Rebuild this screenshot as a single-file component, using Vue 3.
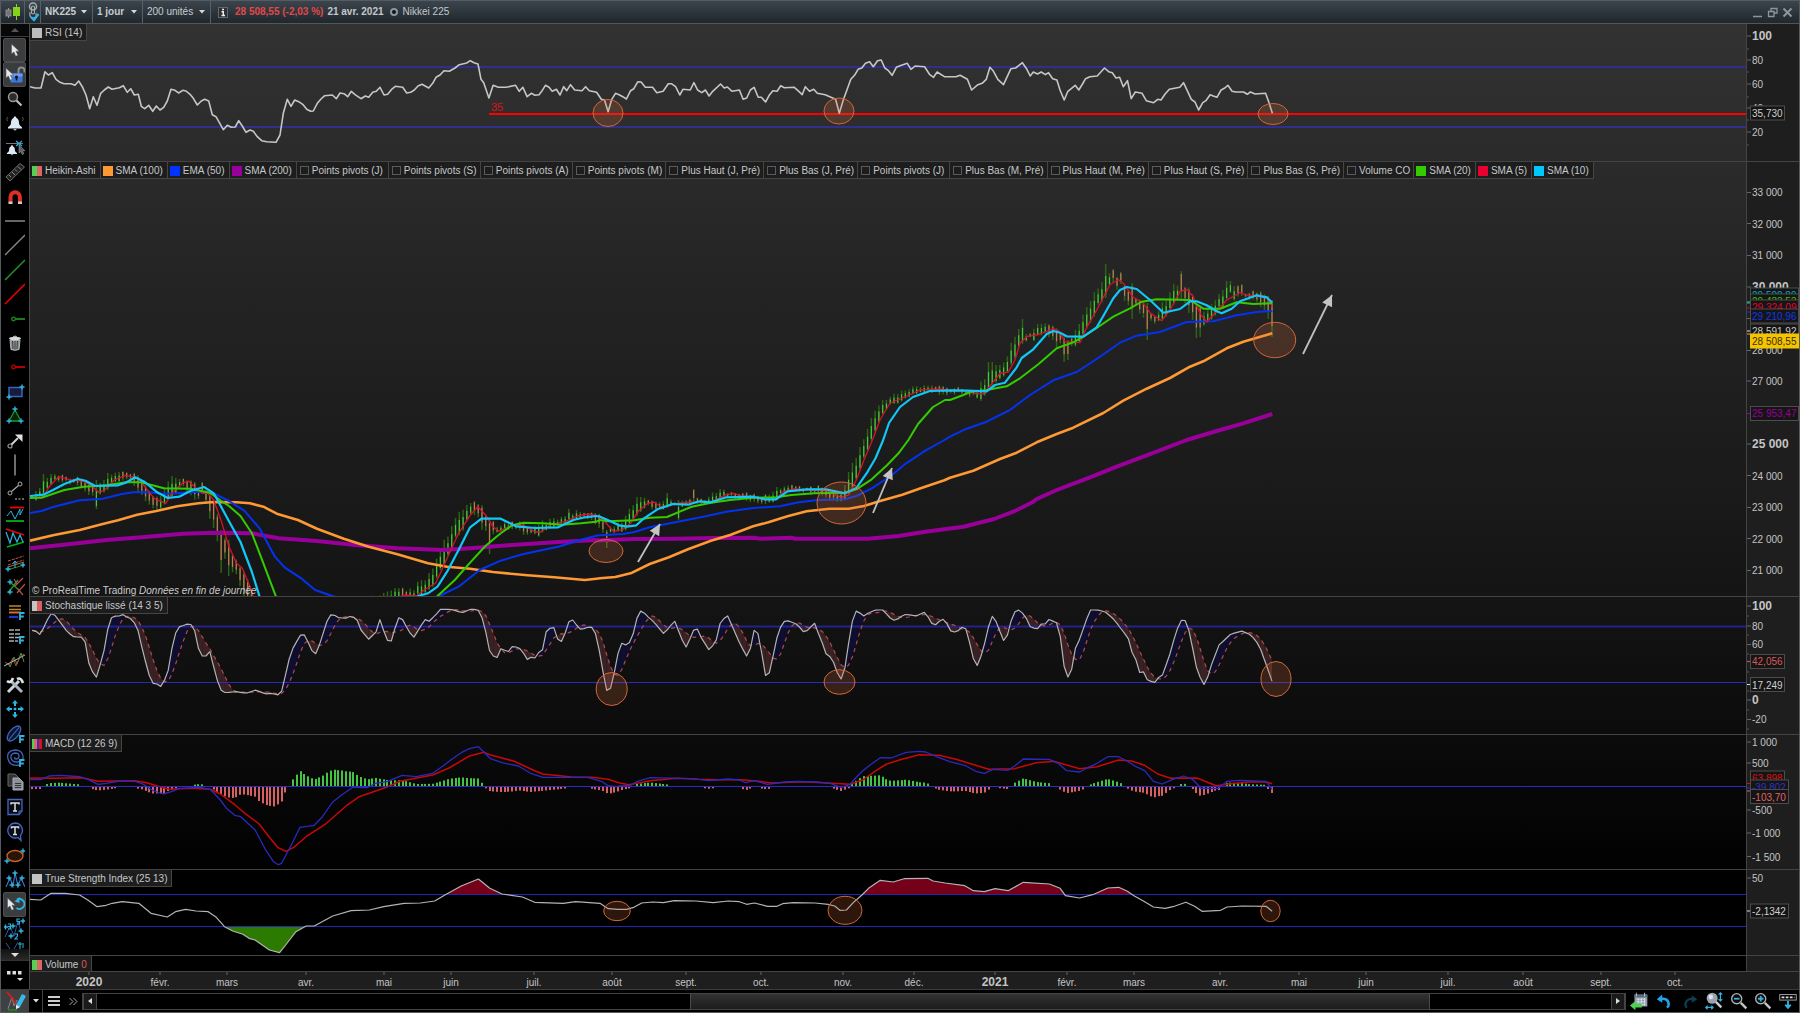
<script setup>
import { ref } from 'vue'

/* ---------- geometry helpers ---------- */

// Reads "x,y x,y …" recorded at a zoom of (kx, 3) from the origin (ox, oy).
function run(ox, oy, kx, text) {
  return text.trim().split(/\s+/).map(pair => {
    const [x, y] = pair.split(',').map(Number)
    return [ox + x / kx, oy + y / 3]
  })
}
const line = pts => pts.map(p => p[0].toFixed(1) + ',' + p[1].toFixed(1)).join(' ')
function at(pts, x) {
  if (x <= pts[0][0]) return pts[0][1]
  for (let i = 1; i < pts.length; i++) {
    if (x <= pts[i][0]) {
      const [x0, y0] = pts[i - 1]
      const [x1, y1] = pts[i]
      return y0 + ((y1 - y0) * (x - x0)) / (x1 - x0 || 1)
    }
  }
  return pts[pts.length - 1][1]
}
const Z = 2.6133

/* ---------- RSI ---------- */

const rsi = [
  ...run(0, 0, 3, `90,260 105,264 123,264 135,215 145,225 157,218 168,238 180,247 192,251 213,251 225,256 236,243 247,260 258,285 269,326 280,290 291,316 302,280 313,270 325,261 336,268 358,263 370,257 382,277 392,266 403,285 415,283 424,319 434,326 446,316 458,334 469,318 480,330 491,322 502,303 513,268 525,271 536,279 548,271 558,273 570,283 580,295 592,315 604,303 614,298 626,303 637,344 648,350 670,389 682,376 694,382 706,381 716,362 727,378 738,397 750,390 760,394 772,410 785,422 800,425 828,427 840,405 850,340 862,298 873,319 884,300 896,305 908,313 920,328 932,334 940,333 952,310 963,297 974,287 997,285 1009,296 1020,279 1032,281 1043,290 1054,274 1065,284 1083,296 1096,288 1106,292 1118,277 1129,274 1140,262 1152,285 1163,283 1174,269 1186,259 1208,262 1220,279 1232,277 1243,270 1254,258 1266,253 1286,264 1298,250 1308,232 1320,225 1332,212 1348,214 1365,204 1378,194 1400,189 1411,182 1422,188 1434,192`),
  ...run(480, 40, 1.912, `2,118 7,128 17,174 25,136 35,142 50,142 68,136 75,154 82,142 90,170 98,160 105,166 113,164 118,154 125,136 132,142 138,154 146,148 153,165 160,140 166,152 173,134 181,150 195,152 202,140 209,152 223,157 232,178 238,180 245,215 252,178 259,160 266,164 273,170 280,177 288,152 294,146 302,125 308,126 316,142 330,142 338,158 350,154 360,131 366,131 374,140 382,165 388,148 402,150 409,128 416,150 424,158 431,150 438,168 445,154 460,132 467,144 473,141 482,154 496,150 503,178 510,174 517,150 524,142 532,172 538,172 546,186 553,166 560,152 568,154 575,137 582,143 601,142 608,152 616,164 622,140 630,154 638,148 645,160 660,164 680,178 687,220 695,178 702,148 709,118 716,106 723,88 730,84 737,70 745,65 752,80 760,62 767,60 774,84 781,92 788,106 796,82 803,77 817,70 824,88 832,78 850,80 860,104 867,112 874,96 888,110 910,110 918,106 932,118 940,150 952,134 960,130 968,118 975,82 981,92 990,118 1001,134 1015,86 1024,84 1037,68 1045,86 1052,108 1058,96 1066,102 1073,96 1081,104 1087,98 1095,116 1103,120 1109,150 1117,180 1124,154 1138,136 1145,150 1152,132 1158,116 1166,110 1180,108 1194,84 1202,95 1209,98 1216,114 1223,112 1230,140 1238,122 1245,176 1253,156 1266,160 1274,182 1288,188 1296,178 1302,180 1310,162 1318,148 1338,142 1345,128 1353,154 1360,178 1367,186 1374,210 1382,188 1388,182 1396,164 1402,168 1409,172 1417,150 1424,144 1430,136 1438,154 1445,156 1460,156 1467,163 1473,156 1482,162 1502,160 1509,190 1515,220`)
]

/* ---------- price overlays ---------- */

const sma100 = [
  ...run(30, 440, Z, `0,302 60,286 130,270 190,252 230,241 280,224 330,213 385,199 440,190 480,186 540,187 575,190 610,200 645,221 700,240 750,266 820,296 885,320 960,343 1040,370 1090,380 1150,386 1210,396 1300,406 1370,412 1450,420 1480,416`),
  ...run(600, 440, Z, `0,415 40,411 80,400 130,372 180,352 230,328 290,302 340,285 400,259 440,247 490,229 540,214 600,206 650,206 690,198 730,184 790,164 840,144 900,121`),
  ...run(950, 240, 3, `0,713 70,692 150,657 200,638 260,607 320,582 370,563 460,519 520,482 590,446 660,414 720,380 760,364 830,325 880,305 967,280`)
]
const sma200 = [
  ...run(30, 440, Z, `0,325 100,313 200,300 300,291 400,281 480,278 580,280 650,295 750,303 850,315 960,325 1080,330 1150,325 1250,316 1380,306 1480,300`),
  ...run(600, 440, Z, `0,301 90,297 200,296 300,294 400,293 420,296 500,293 510,296 700,296 780,288 850,275 950,260 1030,237 1080,215 1130,187`),
  ...run(950, 240, 3, `260,777 320,750 420,712 500,680 590,646 710,600 800,573 880,550 967,522`)
]
const ema50 = [
  ...run(30, 440, Z, `0,219 30,213 60,201 130,181 190,176 240,162 270,157 310,157 350,162 400,158 440,155 480,160 520,183 560,212 600,265 640,350 665,382 710,416 745,450 790,468 900,500 1000,500 1070,468 1120,440 1175,390 1230,362 1290,342 1380,320 1450,296 1480,287`),
  ...run(600, 440, Z, `0,286 60,282 90,276 130,262 200,246 270,230 330,215 400,204 470,199 520,187 570,180 640,178 670,168 710,145 760,108 800,70 850,32 900,0`),
  ...run(950, 240, 3, `0,590 50,566 110,545 180,510 240,465 310,421 380,396 440,357 510,308 560,287 630,276 710,246 790,244 860,226 920,216 967,213`)
]
const sma20 = [
  ...run(30, 440, Z, `0,174 30,173 90,150 140,140 200,136 250,127 290,127 350,145 420,146 470,158 500,183 520,198 550,228 580,280 600,340 643,470 680,560 1000,540 1065,468 1110,420 1150,368 1190,318 1230,280 1260,256 1290,248 1340,250 1390,254 1440,250 1480,245`),
  ...run(600, 440, Z, `0,240 20,244 90,241 130,233 175,231 210,214 240,200 290,188 340,180 400,173 460,172 500,165 560,160 640,158 670,148 710,118 750,76 780,40 806,0`),
  [918, 424], [933, 407], [945, 400],
  ...run(950, 240, 3, `0,480 40,465 60,456 110,450 170,439 210,415 265,373 320,325 370,307 400,290 440,264 490,230 540,205 575,185 620,178 720,180 760,206 810,206 860,187 910,192 967,190`)
]
const sma10 = [
  ...run(30, 440, Z, `0,168 35,164 60,150 90,132 125,117 145,122 170,138 230,136 250,128 275,112 300,126 330,155 360,174 390,170 420,152 455,141 480,160 490,180 520,244 550,306 580,396 600,470 630,560 960,520 1015,468 1040,460 1065,440 1090,395 1120,330 1150,262 1180,236 1230,236 1270,259 1320,264 1380,262 1420,240 1450,232 1480,228`),
  ...run(600, 440, Z, `0,230 20,240 50,256 70,260 95,256 115,235 150,208 190,192 230,194 260,184 290,187 330,172 400,170 430,178 460,178 490,154 540,148 590,148 640,160 670,144 700,94 720,55 740,0`),
  [889, 423], [900, 407], [913, 397], [930, 391],
  ...run(950, 240, 3, `0,451 50,452 110,454 135,435 165,428 200,382 215,354 250,328 290,282 310,273 330,278 350,289 400,290 440,262 460,228 490,175 510,150 530,141 560,147 600,180 640,218 690,207 720,184 740,184 770,196 800,214 815,220 845,206 870,184 920,166 950,172 967,188`)
]
const sma5 = [
  ...run(30, 440, Z, `0,172 35,170 50,140 75,110 100,118 140,124 165,140 180,158 195,150 220,120 250,106 285,115 300,140 325,176 355,190 370,160 400,128 415,124 430,140 450,160 465,160 480,180 500,244 520,320 540,370 555,385 575,440 583,470 620,580 880,500 980,465 1010,468 1030,450 1060,430 1080,380 1100,330 1120,280 1150,226 1170,200 1190,224 1210,260 1225,274 1260,256 1290,256 1320,276 1335,276 1360,254 1400,244 1430,228 1460,222 1480,226`),
  ...run(600, 440, Z, `10,240 20,255 35,274 60,268 80,250 100,214 125,190 140,186 160,200 180,198 200,190 240,186 290,186 330,164 350,160 370,168 390,170 420,176 460,178 480,154 510,146 540,150 590,150 610,162 630,172 650,165 670,120 690,60 712,0`),
  [880, 420], [890, 403], [905, 397], [920, 390], [940, 389],
  ...run(950, 240, 3, `0,452 50,452 70,460 100,462 120,438 150,400 175,396 195,360 210,310 230,290 270,282 310,266 325,272 345,305 390,308 410,262 440,210 480,134 505,119 520,130 550,172 580,190 600,218 635,242 660,210 690,155 710,148 730,170 750,220 770,246 800,214 830,180 870,158 890,165 950,172 967,200`)
]

/* ---------- candles ---------- */

const STEP = 3.78
const LAST = 1272
const bars = []
for (let x = LAST; x > 31; x -= STEP) bars.unshift(x)

// Sessions whose high or low stands out: x, high, low.
const spikes = [
  [45, 474, 495], [97, 480, 509], [109, 473, 490], [119, 472, 482], [171, 476, 498], [204, 482, 494],
  [212, 500, 528], [223, 530, 573], [227, 540, 576], [473, 501, 515], [488, 520, 554], [570, 509, 520],
  [607, 530, 548], [637, 497, 516], [641, 497, 512], [668, 493, 508], [679, 500, 520], [694, 489, 502],
  [720, 489, 500], [850, 472, 494], [854, 463, 490], [989, 362, 390], [993, 362, 386], [1022, 319, 344],
  [1063, 336, 362], [1067, 340, 360], [1104, 264, 298], [1112, 269, 282], [1119, 272, 284], [1131, 283, 319],
  [1149, 303, 340], [1183, 271, 300], [1198, 303, 338], [1202, 305, 337], [1227, 281, 300], [1231, 281, 293],
  [1242, 284, 296], [1268, 296, 319], [1272, 300, 337]
]
const candles = bars.map((x, i) => {
  const n = Math.abs(Math.sin(i * 12.9898) * 43758.5453) % 1
  const m = Math.abs(Math.sin(i * 78.233) * 12345.678) % 1
  const prev = at(sma5, x + 2)
  const next = at(sma5, x + 8)
  const wide = x > 980 || (x > 150 && x < 500) ? 7 : 4
  let hi = Math.min(prev, next) - 1 - n * wide
  let lo = Math.max(prev, next) + 1 + m * wide
  const s = spikes.find(k => Math.abs(k[0] - x) < 1.9)
  if (s) { hi = s[1]; lo = s[2] }
  const up = next < prev
  const span = lo - hi
  return { x, hi, lo, up, top: hi + span * (up ? 0.35 : 0.1), bottom: lo - span * (up ? 0.1 : 0.3) }
})

/* ---------- stochastic ---------- */

const stoch = [
  ...run(30, 440, Z, `0,575 10,568 25,584 35,565 45,540 58,516 68,530 80,548 95,572 112,590 140,592 148,620 155,680 165,698 176,715 182,680 195,625 205,555 213,533 228,526 238,530 245,521 255,534 265,536 280,560 292,620 305,680 318,730 330,730 340,742 350,724 360,700 370,630 380,580 390,560 405,555 418,549 430,570 440,625 450,648 460,648 470,635 480,680 495,745 505,758 540,755 565,760 590,750 615,762 630,760 655,766 665,720 675,665 690,615 700,600 712,575 722,595 732,620 743,648 752,630 765,585 773,550 790,517 800,532 825,535 840,527 855,540 865,570 885,598 900,580 910,570 915,535 925,575 935,603 945,603 955,560 965,530 975,540 990,575 1003,592 1015,570 1032,538 1042,545 1060,525 1072,508 1100,508 1130,518 1150,508 1170,508 1182,535 1190,570 1200,630 1218,660 1230,626 1250,635 1262,617 1285,628 1298,660 1308,650 1317,660 1326,638 1338,636 1350,570 1368,560 1385,618 1395,580 1403,580 1412,522 1420,545 1440,570 1455,562 1472,562 1482,595 1495,680 1510,768 1520,735 1530,680 1540,620 1550,605 1560,620`),
  ...run(600, 440, Z, `78,605 85,590 95,540 102,515 110,512 125,530 140,545 168,583 180,562 197,542 210,590 227,625 237,590 248,562 255,568 263,590 285,630 303,605 315,545 333,526 350,570 365,610 384,650 395,620 403,570 412,576 422,635 433,710 442,700 452,650 463,590 477,545 490,542 510,550 520,558 528,576 548,570 558,540 568,575 578,595 587,640 597,643 612,670 627,722 637,705 646,640 656,560 666,514 675,512 686,530 700,520 720,510 740,510 755,530 765,542 780,536 795,523 832,528 845,514 857,530 872,560 885,545 900,536 918,576 932,576 948,560 960,570 970,635 980,672 988,678 998,640 1010,590 1018,545 1028,523 1040,560 1055,602 1065,585 1075,540 1085,514 1095,510 1110,525 1125,562 1143,567 1155,550 1163,552 1172,538 1193,548 1203,590 1213,680 1222,712 1231,700 1240,630 1250,608 1265,560 1280,510 1300,510 1320,515 1345,540 1370,580 1378,582 1388,635 1398,645 1408,702 1417,685 1427,718 1438,722 1447,732 1457,715 1470,705 1490,640 1502,590 1515,545 1525,536 1535,550 1548,620 1560,690`),
  [1200, 677], [1203, 685], [1206, 683], [1211, 666], [1219, 645], [1231, 634], [1242, 631], [1251, 635], [1259, 645], [1266, 664], [1273, 684]
]
const kLine = bars.map(x => [x, at(stoch, x)])
const dLine = kLine.map((p, i) => {
  const part = kLine.slice(Math.max(0, i - 4), i + 1)
  return [p[0], part.reduce((a, b) => a + b[1], 0) / part.length]
})
const bands = kLine.slice(1).map((p, i) => ({
  up: p[1] + kLine[i][1] < dLine[i + 1][1] + dLine[i][1],
  d: line([kLine[i], p, dLine[i + 1], dLine[i]])
}))

/* ---------- MACD ---------- */

const macd = [
  ...run(0, 720, 2.45, `73,179 100,179 120,168 145,166 170,168 195,170 215,178 240,193 260,190 300,182 330,184 350,192 375,212 400,222 420,215 440,205 490,202 515,208 540,240 555,265 575,286 590,290 625,330 650,388 670,425 682,434 690,430 715,372 735,322 770,316 790,290 815,246 840,222 865,202 900,203 920,190 950,184 985,166 1020,170 1060,160 1085,138 1110,115 1130,98 1150,86 1172,80 1185,95 1200,115 1230,128 1270,138 1300,160 1330,172 1400,172 1440,172 1475,185 1490,197 1510,200`),
  ...run(620, 740, 2.306, `0,138 25,136 40,124 70,113 165,116 205,122 250,117 275,120 290,128 310,122 340,133 380,126 410,124 455,126 485,130 510,142 530,134 545,112 560,92 580,72 600,53 625,54 660,37 690,34 705,36 730,50 760,65 795,76 820,94 840,100 860,88 895,91 910,78 930,57 990,58 1010,70 1030,92 1060,96 1080,82 1100,70 1125,50 1150,50 1170,64 1190,80 1210,92 1230,124 1250,132 1275,118 1300,108 1320,118 1340,145 1380,145 1400,124 1430,121 1490,124 1504,148`)
]
const signal = [
  ...run(0, 720, 2.45, `73,174 130,175 200,173 240,184 330,182 360,188 385,198 415,208 470,205 515,208 540,222 575,254 600,280 635,312 660,352 680,382 700,394 720,382 750,350 800,310 850,256 880,230 950,200 980,184 1060,165 1100,144 1150,108 1185,97 1200,104 1260,124 1310,152 1330,162 1400,171 1450,172 1490,178 1510,186`),
  ...run(620, 740, 2.306, `0,129 20,134 70,122 130,115 180,118 230,119 280,119 320,124 350,129 420,125 490,130 530,133 560,120 590,92 615,72 650,58 690,44 735,46 775,58 820,76 850,88 910,86 960,68 1000,64 1060,86 1100,80 1150,60 1180,63 1210,76 1240,102 1270,115 1330,114 1375,137 1400,133 1450,126 1490,126 1504,131`)
]
const ZERO = 786.5
const histogram = bars
  .map(x => ({ x, h: at(signal, x) - at(macd, x) }))
  .filter(b => Math.abs(b.h) > 0.7)
  .map(b => ({ x: Math.round(b.x) - 1, up: b.h > 0, y: b.h > 0 ? ZERO - b.h - 1 : ZERO, h: Math.abs(b.h) + 1 }))

/* ---------- TSI ---------- */

const tsi = [
  ...run(0, 720, 2.45, `73,538 100,540 125,520 160,520 195,525 215,540 238,560 260,556 275,550 300,545 340,550 370,580 410,591 430,575 455,568 480,573 510,575 530,592 550,620 570,633 595,643 610,655 625,660 660,690 685,698 700,675 725,635 750,618 770,618 815,588 860,572 905,570 940,560 990,550 1030,549 1065,543 1090,525 1130,498 1172,477 1200,505 1230,522 1280,531 1310,547 1380,550 1410,545 1470,550 1490,566 1515,568`),
  ...run(620, 740, 2.306, `0,508 15,508 30,503 50,489 75,486 100,488 125,482 175,483 215,488 250,483 275,485 292,493 310,489 340,499 362,499 375,491 400,488 450,489 480,493 495,498 507,511 522,510 540,485 558,465 575,443 600,421 630,426 655,416 710,415 722,423 750,429 795,437 815,452 840,455 865,446 895,452 930,427 990,432 1015,445 1027,467 1060,474 1090,464 1125,444 1150,442 1170,454 1185,467 1210,485 1230,501 1257,505 1275,500 1305,487 1325,499 1342,514 1385,511 1400,501 1435,498 1490,499 1504,514`)
]
const UPPER = 894.5
const LOWER = 926.5
const fine = []
for (let x = 30; x <= LAST; x += 1) fine.push([x, at(tsi, x)])
const overbought = line([[160, UPPER], ...fine.filter(p => p[0] > 160).map(p => [p[0], Math.min(p[1], UPPER)]), [LAST, UPPER]])
const oversold = line([[30, LOWER], ...fine.map(p => [p[0], Math.max(p[1], LOWER)]), [LAST, LOWER]])

/* ---------- panels ---------- */

const ticks = list => list.map(([y, t, strong]) => ({ y, t, strong }))
const series = (points, color, width) => ({ points: line(points), color, width })
const off = ''
const panels = [
  {
    id: 'rsi', top: 24, h: 138,
    labels: [{ t: 'RSI (14)', c: '#bdbdbd' }],
    levels: [{ y: 67, c: '#30308c', w: 2 }, { y: 127, c: '#30308c', w: 2 }, { y: 114, c: '#f00', w: 2, x: 489 }],
    lines: [series(rsi, '#c6c6c6', 1.6)],
    circles: [[608, 113, 15, 13.5], [839, 111, 15, 13], [1273, 114, 15, 10.5]],
    ticks: ticks([[36, '100', true], [60, '80'], [84, '60'], [108, '40'], [132, '20']]),
    minor: [49, 72, 97, 120, 145],
    tags: [{ y: 113, t: '35,730', w: 34, c: '#d0d0d0' }]
  },
  {
    id: 'price', top: 162, h: 435,
    labels: [
      { t: 'Heikin-Ashi', c: 'linear-gradient(90deg,#55d055 50%,#e06464 50%)' },
      { t: 'SMA (100)', c: '#ff9933' }, { t: 'EMA (50)', c: '#0033ff' }, { t: 'SMA (200)', c: '#990099' },
      { t: 'Points pivots (J)', c: off }, { t: 'Points pivots (S)', c: off }, { t: 'Points pivots (A)', c: off },
      { t: 'Points pivots (M)', c: off }, { t: 'Plus Haut (J, Pré)', c: off }, { t: 'Plus Bas (J, Pré)', c: off },
      { t: 'Points pivots (J)', c: off }, { t: 'Plus Bas (M, Pré)', c: off }, { t: 'Plus Haut (M, Pré)', c: off },
      { t: 'Plus Haut (S, Pré)', c: off }, { t: 'Plus Bas (S, Pré)', c: off }, { t: 'Volume CO', c: off },
      { t: 'SMA (20)', c: '#33cc00' }, { t: 'SMA (5)', c: '#e80030' }, { t: 'SMA (10)', c: '#00c8ff' }
    ],
    levels: [],
    lines: [
      series(sma200, '#990099', 4), series(sma100, '#ff9933', 2.6), series(ema50, '#0433f0', 2),
      series(sma5, '#d8102e', 1.3), series(sma20, '#33cc00', 2), series(sma10, '#12c8fa', 2.2)
    ],
    circles: [[606, 551, 17, 11.5], [841.5, 503, 24.5, 21], [1274.7, 340, 21, 17.7]],
    arrows: [[638, 562, 660, 524], [873, 513, 892, 468], [1303, 354, 1332, 295]],
    ticks: ticks([[192.5, '33 000'], [223.5, '32 000'], [255.5, '31 000'], [287, '30 000', true], [318.5, ''], [350.5, '28 000'], [381, '27 000'], [444, '25 000', true], [475.5, '24 000'], [507.5, '23 000'], [538.5, '22 000'], [570.5, '21 000']]),
    minor: [],
    tags: [
      { y: 295, t: '29 500,89', w: 48, c: '#00a8d0' }, { y: 301, t: '29 433,53', w: 48, c: '#33cc00' },
      { y: 307, t: '29 324,09', w: 48, c: '#e80030' }, { y: 316, t: '29 210,96', w: 48, c: '#1238e8' },
      { y: 331, t: '28 591,92', w: 48, c: '#c8c8c8' }, { y: 341, t: '28 508,55', w: 48, c: '#3a3000', hot: true },
      { y: 413.5, t: '25 953,47', w: 48, c: '#990099' }
    ],
    marks: [[303, '#33cc00'], [302, '#12c8fa'], [308, '#e80030'], [312, '#0433f0'], [331, '#ddd'], [334, '#ff9933'], [413.5, '#990099']],
    note: true
  },
  {
    id: 'stoch', top: 597, h: 138,
    labels: [{ t: 'Stochastique lissé (14 3 5)', c: 'linear-gradient(90deg,#c4c4c4 50%,#d86060 50%)' }],
    levels: [{ y: 626.5, c: '#22228c', w: 2 }, { y: 682.5, c: '#2a2ac0', w: 1 }],
    lines: [series(kLine, '#b4b4b4', 1.2)],
    circles: [[611.7, 689, 15.5, 16.5], [839.5, 682, 15.5, 12.3], [1276, 679, 15, 17.5]],
    ticks: ticks([[606, '100', true], [626, '80'], [644.5, '60'], [700, '0', true], [719.5, '-20']]),
    minor: [616, 635, 654, 672, 691, 710, 729],
    tags: [{ y: 661.5, t: '42,056', w: 34, c: '#d85a5a' }, { y: 684.5, t: '17,249', w: 34, c: '#d0d0d0' }],
    marks: [[661.5, '#d85a5a'], [684.5, '#ddd']]
  },
  {
    id: 'macd', top: 735, h: 135,
    labels: [{ t: 'MACD (12 26 9)', c: 'linear-gradient(90deg,#4fd04f 25%,#e06464 25% 50%,#3030e0 50% 75%,#e01010 75%)' }],
    levels: [],
    lines: [series(signal, '#c80808', 1.5), series(macd, '#2a2ac0', 1.3)],
    circles: [],
    ticks: ticks([[742, '1 000'], [763, '500'], [810, '-500'], [833, '-1 000'], [856.5, '-1 500']]),
    minor: [],
    tags: [{ y: 778, t: '63,898', w: 34, c: '#d81010' }, { y: 787, t: '-39,802', w: 38, c: '#3030c8' }, { y: 796.5, t: '-103,70', w: 38, c: '#e06464' }],
    marks: [[783.5, '#d81010'], [788, '#3030c8'], [791, '#e06464']]
  },
  {
    id: 'tsi', top: 870, h: 86,
    labels: [{ t: 'True Strength Index (25 13)', c: '#c4c4c4' }],
    levels: [{ y: UPPER, c: '#2525b8', w: 1 }, { y: LOWER, c: '#2525b8', w: 1 }],
    lines: [series(tsi, '#b4b4b4', 1.2)],
    circles: [[617, 911, 13.3, 9.7], [845, 910.3, 17, 14], [1270.5, 911, 9.7, 10.7]],
    ticks: ticks([[878, '50']]),
    minor: [],
    tags: [{ y: 911, t: '-2,1342', w: 38, c: '#d0d0d0' }],
    marks: [[911, '#ddd']]
  },
  {
    id: 'volume', top: 956, h: 16,
    labels: [{ t: 'Volume', c: 'linear-gradient(90deg,#55d055 50%,#e06464 50%)', value: '0' }],
    levels: [], lines: [], circles: [], ticks: [], minor: [], tags: []
  }
]
const pct = (p, y) => (((y - p.top) / p.h) * 100).toFixed(3) + '%'
const pctX = x => (((x - 30) / 1716) * 100).toFixed(3) + '%'
function head([x0, y0, x1, y1]) {
  const a = Math.atan2(y1 - y0, x1 - x0)
  const bx = x1 - 11 * Math.cos(a)
  const by = y1 - 11 * Math.sin(a)
  return line([[x1, y1], [bx - 5.5 * Math.sin(a), by + 5.5 * Math.cos(a)], [bx + 5.5 * Math.sin(a), by - 5.5 * Math.cos(a)]])
}

const months = [
  [89, '2020', true], [160, 'févr.'], [227, 'mars'], [306, 'avr.'], [384, 'mai'], [451, 'juin'], [534, 'juil.'],
  [612, 'août'], [686, 'sept.'], [761, 'oct.'], [843, 'nov.'], [914, 'déc.'], [995, '2021', true], [1067, 'févr.'],
  [1134, 'mars'], [1220, 'avr.'], [1299, 'mai'], [1366, 'juin'], [1448, 'juil.'], [1523, 'août'], [1601, 'sept.'], [1675, 'oct.']
]

/* ---------- tools ---------- */

const C = '#2fb4e0'
const plus = (x, y, c = C) => `<path d="M${x - 2.5} ${y}h5M${x} ${y - 2.5}v5" stroke="${c}" stroke-width="1.4"/>`
const cursor = (x, y) => `<path d="M${x} ${y}v10l2.4-2 1.8 4.2 2.2-1-1.9-4h3.2z" fill="#e4e8ec" stroke="#555" stroke-width=".6"/>`
const bell = (x, y, s) => `<g transform="translate(${x} ${y}) scale(${s})"><path d="M0-6.500c-1 0-1.300.7-1.200 1.200C-3.500-4.500-4-2-4 0c0 2-1.500 3-3 4.200v1.300H7V4.200C5.500 3 4 2 4 0c0-2-.5-4.500-2.800-5.300C1.300-5.800 1-6.500 0-6.500z" fill="#dfe9f5"/><path d="M-2 6h4l-2 1.800z" fill="#b8c4d2"/></g>`
const bigF = (x, y) => `<path d="M${x} ${y}v-7h4.500M${x} ${y - 3.5}h3.800" stroke="${C}" stroke-width="1.8" fill="none"/>`
const tools = [
  ['Pointeur', cursor(8.5, 6)],
  ['Verrouillage', `<path d="M15.500 10.500V7.500a3 3 0 0 1 6 0v2" stroke="#8a8f96" stroke-width="2" fill="none"/><rect x="7.500" y="10.500" width="12" height="9" rx="1" fill="#3f78e0"/><rect x="7.500" y="10.500" width="12" height="3" fill="#6c9cf0"/><circle cx="13.500" cy="14" r="1.500" fill="#111"/><path d="M13.500 14v3.500" stroke="#111" stroke-width="1.500"/>${cursor(3, 5)}`, true],
  ['Loupe', `<circle cx="10" cy="10" r="4.500" fill="#2c2c2c" stroke="#9a9a9a" stroke-width="1.400"/><path d="M13.500 13.500l5 5" stroke="#bbb" stroke-width="2.200"/>`],
  ['Alerte', bell(12, 12, 1) + `<path d="M4.500 6q-1.500 2 0 4M19.500 6q1.500 2 0 4" stroke="#555" fill="none"/>`],
  ['Alerte sur objet', `<path d="M3 7.500h17" stroke="#777"/>${bell(9, 14, .72)}<path d="M13 5l6 5m0-5l-6 5" stroke="${C}" stroke-width="1.200"/><path d="M16 9v8l1.800-1.500 1.400 3 1.700-.8-1.400-3h2.400z" fill="#56606c" stroke="#aaa" stroke-width=".5"/>`],
  ['Règle', `<path d="M3 17L17 3.500l4.500 3.500L7 21z" fill="#222" stroke="#777" stroke-width=".9"/><path d="M6 15l2 2M9 12l3 3M12 9.500l2 2M15 6.500l3 3" stroke="#aaa" stroke-width=".8"/>`],
  ['Aimant', `<path d="M7.500 17.500v-5.500a4.700 4.700 0 0 1 9.400 0v5.500" stroke="#dd2f22" stroke-width="4" fill="none"/><path d="M5.500 16.500h4v2.500h-4zM15 16.500h4v2.500h-4z" fill="#ccc"/>`],
  ['Ligne horizontale', `<path d="M2 12h20" stroke="#a8a8a8" stroke-width="1.200"/>`],
  ['Droite', `<path d="M2 22L22 2" stroke="#8a8a8a" stroke-width="1.300"/>`],
  ['Droite verte', `<path d="M2 22L22 2" stroke="#1f9a26" stroke-width="1.500"/>`],
  ['Droite rouge', `<path d="M2 22L22 2" stroke="#e80000" stroke-width="1.600"/>`],
  ['Demi-droite verte', `<circle cx="10.500" cy="12" r="1.800" fill="none" stroke="#1c8a1c" stroke-width="1.300"/><path d="M12.500 12H22" stroke="#22a522" stroke-width="1.500"/>`],
  ['Corbeille', `<path d="M7 9h10l-1 9.500q-4 1.600-8 0z" fill="#8a8f92" stroke="#b5b9bb"/><path d="M9.500 10l.5 8M12 10v8.500M14.500 10l-.5 8" stroke="#444"/><ellipse cx="12" cy="7.500" rx="6" ry="1.700" fill="#d5d9db"/><path d="M10 6q2-2 4 0" stroke="#ccc" fill="none"/>`],
  ['Demi-droite rouge', `<circle cx="10.500" cy="12" r="1.800" fill="none" stroke="#b00" stroke-width="1.300"/><path d="M12.500 12H22" stroke="#f00000" stroke-width="1.500"/>`],
  ['Rectangle', `<rect x="6" y="7.500" width="13" height="9" fill="#141d3c" stroke="#3e63b8" stroke-width="1.500"/>${plus(19, 7)}${plus(6, 17)}`],
  ['Triangle', `<path d="M12 6l6 11H6z" fill="#07230a" stroke="#1f9a26" stroke-width="1.300"/>${plus(12, 5)}${plus(6, 17)}${plus(18, 17)}`],
  ['Flèche', `<circle cx="7" cy="17" r="2" fill="none" stroke="#999" stroke-width="1.200"/><path d="M8.500 15.500L15 9" stroke="#d0d0d0" stroke-width="2"/><path d="M19.500 5.500v7.500l-7.500-7.500z" fill="#e2e2e2"/>`],
  ['Ligne verticale', `<path d="M12 1.500v21" stroke="#c8c8c8" stroke-width="1.100"/>`],
  ['Segment', `<circle cx="7" cy="15" r="2" fill="none" stroke="#aaa"/><circle cx="17" cy="6" r="2" fill="none" stroke="#aaa"/><path d="M8.500 13.500l7-6" stroke="#aaa" stroke-width="1.200"/><path d="M12 21h10" stroke="#ccc" stroke-dasharray="2 1.500"/>`],
  ['Canal horizontal', `<path d="M7 5.500h14" stroke="#e00" stroke-width="1.800"/><path d="M3 19h18" stroke="#00b020" stroke-width="1.800"/><path d="M4 14l4-5 4 8 5-10 0 6 3-6" stroke="${C}" fill="none"/>`],
  ['Canal convergent', `<path d="M3 3l18 6" stroke="#e00" stroke-width="1.800"/><path d="M4 21l17-5" stroke="#00b020" stroke-width="1.800"/><path d="M3 6l4 11 3-10 4 9 3-7 3 7" stroke="${C}" fill="none" stroke-width="1.200"/>`],
  ['Régression', `<path d="M5 10l16-5M5 14l16-5" stroke="#c05a4a" stroke-dasharray="3 1"/><path d="M4 19l17-5" stroke="#2a8a2a"/><path d="M5 16l16-5" stroke="#b07030"/><path d="M12 17v-7m-2 2.500l2-2.500 2 2.500" stroke="${C}" fill="none"/>${plus(5, 18)}${plus(20, 14)}`],
  ['Fourchette', `<path d="M5 18L15 5M8 8l9 8" stroke="#2a9a2a" stroke-width="1.300"/><path d="M11 4l3 5M20 3l-8 8M22 9l-8 9M15 14l5 6" stroke="#b5504a" stroke-width="1.200"/>${plus(7, 7)}${plus(7, 17)}`],
  ['Fibonacci', `<path d="M6 6h12M6 9.500h12" stroke="#b88a30" stroke-width="1.600"/><path d="M6 12.500h12" stroke="#d8682c" stroke-width="2"/><path d="M6 17h9" stroke="#2038c8" stroke-width="2.200"/>${bigF(17, 20)}`],
  ['Extensions', `<path d="M6 6h12M6 10h12M6 13.500h12M6 17h9" stroke="#aaa" stroke-width="1.600" stroke-dasharray="5 1"/>${bigF(17, 20)}`],
  ['Vagues', `<path d="M2 18l3-3 2 4 4-10 3 7 4-11 3 9" stroke="#3a9a3a" fill="none"/><path d="M2 14l4 3 4-7 3 8 4-9 4-3" stroke="#b04a3a" fill="none"/><path d="M1 18L22 7" stroke="#aaa"/>`],
  ['Outils', `<path d="M5 19L16 8" stroke="#ccd4da" stroke-width="3"/><path d="M8 8l11 11" stroke="#aeb6bc" stroke-width="3"/><path d="M4 8q4 3 6-3M14 6q4-2 6 4" stroke="#dfe5e9" stroke-width="2.600" fill="none"/>`],
  ['Déplacer', `<path d="M12 3l3 3.500h-2v2.500h-2V6.500H9zM12 21l3-3.500h-2V15h-2v2.500H9zM3 12l3.500-3v2H9v2H6.500v2zM21 12l-3.500-3v2H15v2h2.500v2zM10.700 10.700h2.600v2.600h-2.600z" fill="${C}"/>`],
  ['Ellipse de Fibonacci', `<g transform="rotate(-50 11 11.500)"><ellipse cx="11" cy="11.500" rx="9" ry="4.500" fill="#0b1530" stroke="#3c62b4" stroke-width="1.400"/><path d="M3 11.500h16" stroke="#3c62b4"/></g>${bigF(17, 21)}`],
  ['Spirale', `<path d="M17 19q-10 2-12-6T12 4q7 0 8 6t-6 6q-5 0-6-4t4-5q4 0 4 3t-3 3q-2 0-1-2" stroke="#3c62b4" stroke-width="1.300" fill="none"/>${bigF(17, 21)}`],
  ['Copier', `<path d="M5 4h7l3 3v9H5z" fill="#333" stroke="#666"/><path d="M10 8h6l4 4v8H10z" fill="#8a9198" stroke="#aab"/><path d="M12 13.500h6M12 15.500h6M12 17.500h6" stroke="#333"/>`],
  ['Texte', `<path d="M5 4.500h14v11.500l-3 3.500H5z" fill="#080c18" stroke="#4468bc" stroke-width="1.300"/><path d="M19 16h-3v3.500" stroke="#4468bc" fill="none"/><path d="M8 9.500V8h8v1.500M12 8v8M10 16h4" stroke="#ddd" stroke-width="1.500" fill="none"/>`],
  ['Bulle', `<path d="M12 4a7.500 7.500 0 1 0 3 14.500l3 3-.5-5A7.500 7.500 0 0 0 12 4z" fill="#080c18" stroke="#4468bc" stroke-width="1.300"/><path d="M8.500 9.500V8h7v1.500M12 8v7.500M10 15.500h4" stroke="#ddd" stroke-width="1.500" fill="none"/>`],
  ['Ellipse', `<ellipse cx="12" cy="12" rx="8" ry="5.500" fill="#2a1408" stroke="#c8622c" stroke-width="1.300"/>${plus(20, 7)}${plus(4, 17)}`],
  ['Tête-épaules', `<path d="M3 19l4-9 3 8 2-13 3 13 3-8 4 9" stroke="#3a70c0" stroke-width="1.200" fill="none"/>${plus(6, 10)}${plus(12, 5)}${plus(19, 10)}${plus(9, 17)}${plus(15, 17)}`],
  ['Mode répété', `${cursor(4.5, 6)}<path d="M14 7.500a5 5 0 1 1-.5 8.500" stroke="${C}" stroke-width="1.800" fill="none"/><path d="M11.500 9.500l5-4.500v6z" fill="${C}"/>`, true],
  ['Vagues d’Elliott', `<path d="M2 20L7 9l4 10 4-15 3 11" stroke="#2c5a9a" fill="none"/>${plus(10, 9)}${plus(20, 4)}${plus(8, 19)}${plus(18, 14)}${plus(2.5, 10)}<path d="M5 7h2.500v5H5m0-2.500h2.500M17 2h-3v2.500h2.500V7H14M12 17h2.500v2L12 22h3" stroke="${C}" fill="none" stroke-width="1.100"/>`]
]
const bottomTools = [
  ['Aller à la date', `<rect x="6" y="5" width="14" height="13" fill="#8e9cac"/><path d="M6 5h14v3H6z" fill="#5c6c7c"/><path d="M8 10h10M8 13h10M8 16h10M10 9v8M13.500 9v8M17 9v8" stroke="#e0e6ec" stroke-width=".9"/><path d="M8 3v4M17 3v4" stroke="#ccd"/><path d="M1 17l6-5v3h7v4H7v3z" fill="#4fd04f"/>`],
  ['Annuler', `<path d="M6 10q10-2 10 6 0 2-2 3" stroke="#1fa4f0" stroke-width="2.800" fill="none"/><path d="M3 10l6-5v9z" fill="#1fa4f0"/>`],
  ['Rétablir', `<path d="M19 10q-10-2-11 6 0 2 2 3" stroke="#0b4058" stroke-width="2.400" fill="none"/><path d="M21 10l-6-4v8z" fill="#0b4058"/>`],
  ['Zoom auto', `<circle cx="10" cy="9" r="6" fill="#9aa4ae"/><circle cx="8.500" cy="7.500" r="2.500" fill="#dde3e8"/><path d="M14 13l6 6" stroke="#ccc" stroke-width="2.600"/><path d="M19 3v9m-2-7l2-2 2 2m-4 5l2 2 2-2M3 19h8m-6-2l-2 2 2 2m4-4l2 2-2 2" stroke="${C}" stroke-width="1.300" fill="none"/>`],
  ['Zoom arrière', `<circle cx="9.500" cy="9.500" r="5.500" fill="#0a0a0a" stroke="#b0b0b0" stroke-width="1.500"/><path d="M14 14l6 6" stroke="#c4c4c4" stroke-width="2.600"/><path d="M6.500 9.500h6" stroke="${C}" stroke-width="2"/>`],
  ['Zoom avant', `<circle cx="9.500" cy="9.500" r="5.500" fill="#0a0a0a" stroke="#b0b0b0" stroke-width="1.500"/><path d="M14 14l6 6" stroke="#c4c4c4" stroke-width="2.600"/><path d="M6.500 9.500h6M9.500 6.500v6" stroke="${C}" stroke-width="2"/>`],
  ['Clavier', `<rect x="3" y="5" width="18" height="6" fill="none" stroke="#aaa"/><path d="M5 8h14" stroke="#ddd" stroke-width="2" stroke-dasharray="3 1.500"/><path d="M12 12v7m-3-3l3 3.500 3-3.500" stroke="${C}" stroke-width="2" fill="none"/>`]
]

const symbol = ref('NK225')
const period = ref('1 jour')
const units = ref('200 unités')
</script>

<template>
  <div class="window">
    <header class="titlebar">
      <button class="cell candle" aria-label="Graphique">
        <svg width="18" height="18" viewBox="0 0 18 18"><path d="M4.500 5v10" stroke="#999" /><rect x="2" y="7" width="5" height="6" fill="#6f7477" stroke="#999" stroke-width=".8" /><path d="M12.500 1v16" stroke="#9c3" /><rect x="9" y="4" width="7" height="9" fill="#86d41a" /></svg>
      </button>
      <button class="cell link" aria-label="Lier">
        <svg width="14" height="20" viewBox="0 0 14 20"><circle cx="7" cy="4.500" r="3.500" fill="none" stroke="#a4abb0" stroke-width="1.500" /><rect x="5.500" y="4" width="3" height="8" rx="1.500" fill="none" stroke="#a4abb0" stroke-width="1.200" /><path d="M4 10q-1 6 3 6t3-5" fill="none" stroke="#8a9298" stroke-width="1.500" /><path d="M5 15l3 3 4.500-6" stroke="#25b8ea" stroke-width="2.200" fill="none" /></svg>
      </button>
      <label class="drop sym">
        <select v-model="symbol" class="bold" aria-label="Valeur"><option>NK225</option></select>
        <svg class="caret" width="6" height="4" viewBox="0 0 6 4"><path d="M0 0h6L3 3.500z" fill="#d4d8da" /></svg>
      </label>
      <label class="drop per">
        <select v-model="period" class="bold" aria-label="Période"><option>1 jour</option></select>
        <svg class="caret" width="6" height="4" viewBox="0 0 6 4"><path d="M0 0h6L3 3.500z" fill="#d4d8da" /></svg>
      </label>
      <label class="drop uni">
        <select v-model="units" aria-label="Unités"><option>200 unités</option></select>
        <svg class="caret" width="6" height="4" viewBox="0 0 6 4"><path d="M0 0h6L3 3.500z" fill="#d4d8da" /></svg>
      </label>
      <div class="quote">
        <svg class="info" width="10" height="11" viewBox="0 0 10 11"><rect x=".5" y=".5" width="9" height="10" fill="#2c2f33" stroke="#666" /><path d="M4 2.500h2M3.500 4.800H5.300V8.500M3.500 8.500h3.500" stroke="#eee" stroke-width="1.400" fill="none" /></svg>
        <strong class="fall">28 508,55 (-2,03 %)</strong>
        <strong>21 avr. 2021</strong>
        <i class="dot"></i>
        <span>Nikkei 225</span>
      </div>
      <div class="controls">
        <button aria-label="Réduire"><svg width="11" height="11" viewBox="0 0 11 11"><path d="M1 9.500h9" stroke="#8d969c" stroke-width="1.500" /></svg></button>
        <button aria-label="Restaurer"><svg width="11" height="11" viewBox="0 0 11 11"><path d="M4 4V1.500h6V6H7.500M1.500 4.500h5.500v5H1.500z" stroke="#8d969c" fill="none" stroke-width="1.300" /></svg></button>
        <button aria-label="Fermer"><svg width="11" height="11" viewBox="0 0 11 11"><path d="M1.500 1.500l8 8m0-8l-8 8" stroke="#8d969c" stroke-width="2" /></svg></button>
      </div>
    </header>

    <div class="body">
      <nav class="sidebar" aria-label="Outils de dessin">
        <button class="scroll up" aria-label="Défiler vers le haut"><svg width="8" height="4" viewBox="0 0 8 4"><path d="M0 4l4-4 4 4z" fill="#555" /></svg></button>
        <button v-for="(t, i) in tools" :key="t[0]" class="tool" :class="{ on: i === 0 || t[2] }" :aria-label="t[0]">
          <svg width="24" height="24" viewBox="0 0 24 24" fill="none" v-html="t[1]"></svg>
        </button>
        <button class="peek" aria-label="Vagues ABC">
          <svg width="24" height="8" viewBox="0 0 24 8"><path d="M3 2l4 6M11 8l4-7" stroke="#2c5a9a" /><path d="M15 3h4M17 1v7M20 2v5" stroke="#2fb4e0" /></svg>
        </button>
        <button class="scroll down" aria-label="Défiler vers le bas"><svg width="8" height="4" viewBox="0 0 8 4"><path d="M0 0h8L4 4z" fill="#ddd" /></svg></button>
        <button class="more" aria-label="Plus d’outils"><svg width="18" height="14" viewBox="0 0 18 14"><path d="M1 3h3.500v3.500H1zM6.500 3H10v3.500H6.500zM12 3h3.500v3.500H12z" fill="#ddd" /><path d="M11 10h6l-3 3z" fill="#ddd" /></svg></button>
      </nav>

      <main class="plot">
        <section v-for="p in panels" :key="p.id" class="panel" :style="{ flexGrow: p.h }">
          <div class="stage">
            <svg class="chart" width="100%" height="100%">
              <svg width="100%" height="100%" :viewBox="`30 ${p.top} 1716 ${p.h}`" preserveAspectRatio="none" fill="none">
                <template v-if="p.id === 'stoch'">
                  <polygon v-for="(b, i) in bands" :key="i" :points="b.d" :fill="b.up ? '#0e0e30' : '#3a2224'" />
                </template>
                <template v-if="p.id === 'tsi'">
                  <polygon :points="overbought" fill="#75001a" />
                  <polygon :points="oversold" fill="#2d7a00" />
                </template>
                <line v-for="(l, i) in p.levels" :key="'l' + i" :x1="l.x || 30" x2="1746" :y1="l.y" :y2="l.y" :stroke="l.c" :stroke-width="l.w" />
                <template v-if="p.id === 'price'">
                  <g v-for="(c, i) in candles" :key="'c' + i">
                    <line :x1="c.x" :x2="c.x" :y1="c.hi" :y2="c.lo" stroke="#2b6414" stroke-width="1.500" />
                    <line :x1="c.x" :x2="c.x" :y1="c.top" :y2="c.bottom" :stroke="c.up ? '#46c83e' : '#c47858'" stroke-width="1.200" />
                  </g>
                </template>
                <template v-if="p.id === 'macd'">
                  <rect v-for="(b, i) in histogram" :key="'h' + i" :x="b.x" :y="b.y" width="2" :height="b.h" :fill="b.up ? '#44c444' : '#d86060'" />
                </template>
                <polyline v-if="p.id === 'stoch'" :points="line(dLine)" stroke="#b04a4a" stroke-dasharray="4 4" stroke-width="1.200" />
                <polyline v-for="(s, i) in p.lines" :key="'s' + i" :points="s.points" :stroke="s.color" :stroke-width="s.width" stroke-linejoin="round" />
                <line v-if="p.id === 'macd'" x1="30" x2="1746" :y1="ZERO" :y2="ZERO" stroke="#2a2ac8" />
                <ellipse v-for="(c, i) in p.circles" :key="'e' + i" :cx="c[0]" :cy="c[1]" :rx="c[2]" :ry="c[3]" fill="#e0703a" fill-opacity=".2" stroke="#d0683a" />
                <g v-for="(a, i) in p.arrows || []" :key="'a' + i">
                  <line :x1="a[0]" :y1="a[1]" :x2="a[2]" :y2="a[3]" stroke="#c0c0c0" stroke-width="1.800" />
                  <polygon :points="head(a)" fill="#c4c4c4" />
                </g>
              </svg>
              <text v-if="p.id === 'rsi'" class="mark" :x="pctX(491)" :y="pct(p, 111)">35</text>
            </svg>
            <div class="legend">
              <button v-for="(l, i) in p.labels" :key="i" class="item" :class="{ off: !l.c }">
                <i class="swatch" :style="l.c ? { background: l.c } : null"></i>{{ l.t }}<b v-if="l.value" class="val">{{ l.value }}</b>
              </button>
            </div>
            <p v-if="p.note" class="note">© ProRealTime Trading <em>Données en fin de journée</em></p>
          </div>
          <svg class="axis" width="53" height="100%">
            <line v-for="(t, i) in p.ticks" :key="'t' + i" x1="0" x2="4" :y1="pct(p, t.y)" :y2="pct(p, t.y)" stroke="#666" />
            <line v-for="y in p.minor" :key="'n' + y" x1="0" x2="2" :y1="pct(p, y)" :y2="pct(p, y)" stroke="#555" />
            <line v-for="(m, i) in p.marks || []" :key="'k' + i" x1="0" x2="4" :y1="pct(p, m[0])" :y2="pct(p, m[0])" :stroke="m[1]" />
            <text v-for="(t, i) in p.ticks" :key="'x' + i" x="5" dy="4" :y="pct(p, t.y)" :class="{ strong: t.strong }">{{ t.t }}</text>
            <svg v-for="(g, i) in p.tags" :key="'g' + i" x="3" :y="pct(p, g.y)" overflow="visible">
              <rect x=".5" y="-7" :width="g.w" height="14" :fill="g.hot ? '#f5c400' : '#151515'" :stroke="g.hot ? '#f5c400' : '#4c4c4c'" />
              <text x="2" y="4" :style="{ fill: g.c }">{{ g.t }}</text>
            </svg>
          </svg>
        </section>
        <div class="timeline">
          <svg width="100%" height="17">
            <g v-for="(m, i) in months" :key="i">
              <line :x1="pctX(m[0])" :x2="pctX(m[0])" y1="0" y2="3" stroke="#666" />
              <text :x="pctX(m[0])" y="14" text-anchor="middle" :class="{ strong: m[2] }">{{ m[1] }}</text>
            </g>
          </svg>
          <div class="corner"></div>
        </div>
      </main>
    </div>

    <footer class="bottombar">
      <button class="draw" aria-label="Dessiner"><svg width="24" height="22" viewBox="0 0 24 22"><path d="M5 19l4-12 2 9 3-6" stroke="#888" fill="none" /><path d="M4 2l10 12" stroke="#e01818" stroke-width="1.800" /><path d="M5 20h9" stroke="#1c8a1c" stroke-width="1.600" /><path d="M13 15l6-11 4 2-6 11-4 2z" fill="#37b8ea" /><path d="M13 15l4 2-4 2z" fill="#eee" /></svg></button>
      <button class="arrow" aria-label="Options"><svg width="6" height="4" viewBox="0 0 6 4"><path d="M0 0h6L3 3.500z" fill="#ddd" /></svg></button>
      <button class="menu" aria-label="Menu"><svg width="12" height="12" viewBox="0 0 12 12"><path d="M0 2h12M0 6h12M0 10h12" stroke="#ccc" stroke-width="2" /></svg></button>
      <button class="menu more-tabs" aria-label="Développer"><svg width="9" height="9" viewBox="0 0 9 9"><path d="M.5 1l3.500 3.500L.5 8M4.500 1L8 4.500 4.500 8" stroke="#aaa" fill="none" /></svg></button>
      <div class="scrollbar">
        <button aria-label="Reculer"><svg width="4" height="6" viewBox="0 0 4 6"><path d="M4 0v6L0 3z" fill="#ddd" /></svg></button>
        <div class="track"><div class="before"></div><div class="thumb"></div><div class="after"></div></div>
        <button aria-label="Avancer"><svg width="4" height="6" viewBox="0 0 4 6"><path d="M0 0v6l4-3z" fill="#ddd" /></svg></button>
      </div>
      <div class="actions">
        <button v-for="b in bottomTools" :key="b[0]" :aria-label="b[0]"><svg width="22" height="22" viewBox="0 0 24 24" fill="none" v-html="b[1]"></svg></button>
      </div>
    </footer>
  </div>
</template>

<style>
body { background: #000; }
</style>

<style scoped>
.window {
  box-sizing: border-box;
  display: flex;
  flex-direction: column;
  height: 100vh;
  min-height: 640px;
  border: 1px solid #555b60;
  background: #000;
  color: #c4c8ca;
  font: 10px/14px "Liberation Sans", Arial, sans-serif;
  overflow: hidden;
}
button { margin: 0; padding: 0; border: 0; background: none; color: inherit; font: inherit; display: flex; align-items: center; justify-content: center; }
svg { display: block; flex: none; }

.titlebar {
  box-sizing: border-box;
  flex: none;
  display: flex;
  height: 23px;
  border-bottom: 1px solid #50585e;
  background: linear-gradient(#3b454d, #20272d);
}
.cell { border-right: 1px solid #566068; }
.candle { width: 24px; }
.link { width: 16px; }
.drop { display: grid; align-items: center; border-right: 1px solid #566068; }
.drop > * { grid-area: 1 / 1; }
.sym { width: 51px; }
.per { width: 49px; }
.uni { width: 67px; }
select { appearance: none; width: 100%; border: 0; background: none; color: #c8cccf; font: inherit; padding: 0 0 0 4px; outline: 0; }
.bold { font-weight: 700; }
.caret { justify-self: end; margin-right: 5px; pointer-events: none; }
.quote { flex: 1; display: flex; align-items: center; gap: 4px; padding-left: 7px; white-space: nowrap; }
.info { margin-right: 3px; }
.fall { color: #e04848; }
.dot { width: 4px; height: 4px; margin: 0 1px 0 2px; border: 2px solid #8d969c; border-radius: 50%; background: #111; }
.controls { display: flex; gap: 4px; padding-right: 6px; align-items: center; }

.body { flex: 1; display: flex; min-height: 0; }
.sidebar {
  box-sizing: border-box;
  flex: none;
  display: flex;
  flex-direction: column;
  width: 29px;
  border-right: 1px solid #4a4a4a;
  background: #000;
}
.scroll { flex: none; background: linear-gradient(#111, #2a2a2a); }
.up { height: 13px; border-bottom: 1px solid #3a3a3a; margin-bottom: 1px; background: #080808; }
.down { height: 12px; border-bottom: 1px solid #333; }
.tool { box-sizing: border-box; flex: 1 1 0; min-height: 0; margin: 0 3px 0 2px; border: 1px solid transparent; overflow: hidden; }
.tool.on { background: #3a3c3e; border-color: #4c4e50; border-radius: 2px; }
.peek { flex: none; height: 8px; overflow: hidden; }
.more { flex: none; height: 28px; }

.plot { flex: 1; display: flex; flex-direction: column; min-width: 0; background: linear-gradient(#323232, #252525 25%, #151515 58%, #0b0b0b 74%, #000 89%); }
.panel { flex: 1 1 0; display: flex; min-height: 0; box-shadow: 0 -1px 0 #444; }
.panel:first-child { box-shadow: none; }
.stage { flex: 1; display: grid; min-width: 0; min-height: 0; grid-template-rows: 100%; }
.stage > * { grid-area: 1 / 1; }
.chart { min-height: 0; }
.axis { box-sizing: border-box; background: #1e1e1e; border-left: 1px solid #444; overflow: visible; }
text { fill: #c4c4c4; font-size: 10px; }
.strong { font-size: 12px; font-weight: 700; }
.mark { fill: #e01010; font-size: 11px; }
.legend { align-self: start; justify-self: start; display: flex; max-width: 100%; overflow: hidden; }
.item {
  box-sizing: border-box;
  height: 17px;
  padding: 1px 4px 0 2px;
  border: solid #454545;
  border-width: 0 1px 1px 0;
  background: #1d1d1d;
  white-space: nowrap;
}
.swatch { flex: none; width: 10px; height: 10px; margin-right: 3px; }
.off { min-width: 92px; padding: 1px 3px 0 2px; justify-content: flex-start; }
.off:nth-child(16) { min-width: 0; }
.off .swatch { box-sizing: border-box; width: 9px; height: 9px; margin: 0 3px 0 1px; border: 1px solid #5a5a5a; }
.val { color: #d85a5a; font-weight: 400; margin-left: 3px; }
.note { align-self: end; justify-self: start; margin: 0 0 -1px 2px; white-space: pre; color: #ccc; }

.timeline { flex: none; display: flex; height: 17px; background: #1e1e1e; box-shadow: 0 -1px 0 #444; }
.timeline > svg { flex: 1; min-width: 0; }
.corner { flex: none; width: 53px; background: #1e1e1e; }

.bottombar { box-sizing: border-box; flex: none; display: flex; align-items: center; height: 23px; border-top: 1px solid #3c3c3c; background: #000; }
.draw { width: 28px; height: 100%; background: #3e4042; }
.arrow { width: 14px; height: 100%; border-right: 1px solid #444; }
.menu { width: 22px; }
.more-tabs { width: 17px; }
.scrollbar { box-sizing: border-box; flex: 1; display: flex; height: 17px; border: 1px solid #444; }
.scrollbar button { width: 14px; background: #1a1a1a; border: solid #444; border-width: 0 1px; }
.track { flex: 1; display: flex; }
.before { flex: 594; }
.thumb { flex: 739; background: linear-gradient(#323232, #1c1c1c); border: solid #4a4a4a; border-width: 0 1px; }
.after { flex: 181; }
.actions { flex: none; display: flex; justify-content: space-between; width: 170px; margin-left: 3px; }
</style>
